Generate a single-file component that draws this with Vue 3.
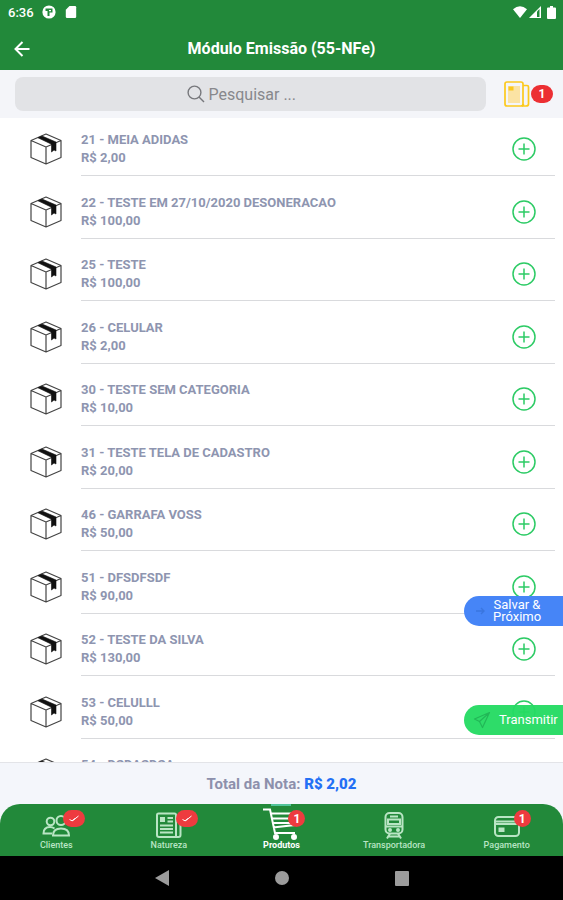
<template>
    <div class="screen">
        <div class="statusBar">
            <span class="clock">6:36</span>
            <svg class="sysIcon" viewBox="0 0 14 14" width="14" height="14">
                <circle cx="7" cy="7" r="6.6" fill="#fff" />
                <path d="M3.500 3.500h7v4H7.500v3.500H5.500V6H3.500z" fill="#22893a" />
                <path d="M7 5h2v1.200H7z" fill="#fff" />
            </svg>
            <svg class="sysIcon" viewBox="0 0 14 14" width="14" height="14">
                <path d="M5.5 1h5.5q1.2 0 1.2 1.2v9.6q0 1.2-1.2 1.2H3q-1.2 0-1.2-1.2V4.7z" fill="#fff" />
            </svg>
            <div class="sysRight">
                <svg viewBox="0 0 14 12" width="14" height="12">
                    <path d="M7 12L0 3.2Q7-2.8 14 3.2z" fill="#fff" />
                </svg>
                <svg viewBox="0 0 12 12" width="12" height="12">
                    <path d="M0 12L12 0v12z" fill="#fff" />
                    <path d="M8 5.500l2.500-2.500v8H8z" fill="#22893a" />
                </svg>
                <svg class="battery" viewBox="0 0 9 13" width="9" height="13">
                    <path d="M3 0h3v1.5h2q1 0 1 1V12q0 1-1 1H1q-1 0-1-1V2.500q0-1 1-1h2z" fill="#fff" />
                </svg>
            </div>
        </div>
        <header class="header">
            <button class="back" type="button" aria-label="Voltar">
                <svg viewBox="0 0 16 16" width="16" height="16" fill="none" stroke="#fff" stroke-width="2">
                    <path d="M15.500 8H1.500M8.500 1L1.500 8l7 7" />
                </svg>
            </button>
            <h1>Módulo Emissão (55-NFe)</h1>
        </header>
        <div class="toolbar">
            <label class="search">
                <svg viewBox="0 0 18 18" width="18" height="18" fill="none" stroke="#77787c" stroke-width="1.4">
                    <circle cx="7.500" cy="7.500" r="6.400" />
                    <path d="M12 12l5 5" />
                </svg>
                <input v-model="term" type="text" placeholder="Pesquisar ..." aria-label="Pesquisar">
            </label>
            <button class="cart" type="button" aria-label="Itens da nota">
                <svg viewBox="0 0 26 26" width="26" height="26" fill="none" stroke="#fcc91d" stroke-width="1.700">
                    <path d="M4 5h12v17H4z" fill="#fbe3a4" stroke="none" />
                    <rect x="1" y="1" width="18" height="24" rx="2" />
                    <path d="M19 4.500h4q1.500 0 1.500 1.500v17q0 2-2.500 2h-4q1.500-.5 1.500-2" />
                    <rect x="4.500" y="5.500" width="5" height="4" fill="#fcc91d" stroke="none" />
                </svg>
                <span class="badge">1</span>
            </button>
        </div>
        <main class="content">
            <ul class="list">
                <li v-for="item in filtered" :key="item.code" class="item">
                    <svg class="box" viewBox="0 0 32 32" width="32" height="32" fill="none" stroke="#444" stroke-width="1.200" stroke-linejoin="round">
                        <path d="M16 1L31 7.500v17L16 31 1 24.500v-17zM1 7.500L16 14l15-6.500M16 14v17" />
                        <path d="M8 4.800L12 3 26 9v9l-2-1-2.500 2v-7.800z" fill="#111" stroke="#111" stroke-width=".6" />
                    </svg>
                    <div class="info">
                        <div class="text">
                            <h2>{{item.code}} - {{item.name}}</h2>
                            <p>R$ {{item.price}}</p>
                        </div>
                        <button class="add" type="button" aria-label="Adicionar">
                            <svg viewBox="0 0 24 24" width="24" height="24" fill="none" stroke="#2dcb65" stroke-width="1.500">
                                <circle cx="12" cy="12" r="11" />
                                <path d="M12 6.500v11M6.500 12h11" />
                            </svg>
                        </button>
                    </div>
                </li>
            </ul>
            <div class="actions">
                <button class="action save" type="button">
                    <svg viewBox="0 0 18 18" width="18" height="18" fill="none" stroke="#3a76df" stroke-width="1.400">
                        <path d="M3 9h8M8 6l3 3-3 3" />
                    </svg>
                    <span>Salvar &amp; Próximo</span>
                </button>
                <button class="action send" type="button">
                    <svg viewBox="0 0 18 18" width="18" height="18" fill="none" stroke="#22b757" stroke-width="1.200" stroke-linejoin="round">
                        <path d="M16.500 1.500L1.500 8l5 2.500L9.500 16.500zM16.500 1.500L6.500 10.500" />
                    </svg>
                    <span>Transmitir</span>
                </button>
            </div>
        </main>
        <div class="total">Total da Nota:&nbsp;<strong>R$ 2,02</strong></div>
        <div class="tabsWrap">
            <nav class="tabs">
                <button v-for="tab in tabs" :key="tab.id" class="tab" :class="{ active : tab.id === current }" type="button" @click="current = tab.id">
                    <span class="tabIcon">
                        <svg v-if="tab.id === 'clientes'" viewBox="0 0 28 28" width="28" height="28">
                            <circle cx="8.500" cy="9.500" r="3.800" />
                            <circle cx="19" cy="8.500" r="4.500" />
                            <path d="M11 23.500q0-7 8-7t8 7zM10 21.500H1.500q0-6.500 6.500-6.500 2.500 0 4.500 1.500" />
                        </svg>
                        <svg v-else-if="tab.id === 'natureza'" viewBox="0 0 28 28" width="28" height="28">
                            <path d="M21 25H4q-2 0-2-2V3q0-1.500 1.500-1.500h16Q21 1.500 21 3zM21 6h3.500q1 0 1 1v16q0 2-2 2H21" />
                            <path d="M12.500 6H18M12.500 9.500H18M5 13.500h13M5 17h13M5 20.500h13" />
                            <path d="M6 6h3v3H6z" fill="currentColor" />
                        </svg>
                        <svg v-else-if="tab.id === 'produtos'" viewBox="0 0 36 32" width="36" height="32">
                            <path d="M0 1.500h7l5 23.500h20M8 5.500h26l-2.500 11.500-21.500 2.500" />
                            <path d="M9 10.500h24M10 15h22" />
                            <circle cx="13" cy="29" r="2" fill="currentColor" />
                            <circle cx="31" cy="29" r="2" fill="currentColor" />
                        </svg>
                        <svg v-else-if="tab.id === 'transportadora'" viewBox="0 0 28 28" width="28" height="28">
                            <rect x="5.500" y="1" width="17" height="20.500" rx="4" />
                            <path d="M10 4.500h8M8 7.500h12v4.500H8zM6 14.500h16M10 21.500l-3 5M18 21.500l3 5M8.500 24.500h11" />
                            <circle cx="10" cy="18" r="1" />
                            <circle cx="18" cy="18" r="1" />
                        </svg>
                        <svg v-else viewBox="0 0 28 28" width="28" height="28">
                            <rect x="2" y="5" width="24" height="19" rx="3.500" />
                            <path d="M2 9.500h24M2 12h24" />
                            <path d="M6.500 16.500h4v2.500H6.500z" fill="currentColor" />
                        </svg>
                        <span v-if="tab.badge" class="tabBadge" :class="{ round : !tab.done }">
                            <svg v-if="tab.done" viewBox="0 0 12 10" width="12" height="10">
                                <path d="M1.500 5.500L4 6.800 7 4.500M4.500 6.800L10.500 2" />
                            </svg>
                            <template v-else>{{tab.badge}}</template>
                        </span>
                    </span>
                    <span class="tabLabel">{{tab.label}}</span>
                </button>
            </nav>
        </div>
        <div class="androidNav">
            <button type="button" aria-label="Voltar"><svg viewBox="0 0 16 16" width="16" height="16"><path d="M15 0v16L1 8z" /></svg></button>
            <button type="button" aria-label="Início"><svg viewBox="0 0 16 16" width="16" height="16"><circle cx="8" cy="8" r="7" /></svg></button>
            <button type="button" aria-label="Recentes"><svg viewBox="0 0 16 16" width="16" height="16"><rect x="1" y="1" width="14" height="15" rx="1" /></svg></button>
        </div>
    </div>
</template>
<script setup>
    import { ref,computed } from 'vue'
    const term = ref("");
    const current = ref("produtos");
    const items = [
        { code : 21, name : "MEIA ADIDAS", price : "2,00" },
        { code : 22, name : "TESTE EM 27/10/2020 DESONERACAO", price : "100,00" },
        { code : 25, name : "TESTE", price : "100,00" },
        { code : 26, name : "CELULAR", price : "2,00" },
        { code : 30, name : "TESTE SEM CATEGORIA", price : "10,00" },
        { code : 31, name : "TESTE TELA DE CADASTRO", price : "20,00" },
        { code : 46, name : "GARRAFA VOSS", price : "50,00" },
        { code : 51, name : "DFSDFSDF", price : "90,00" },
        { code : 52, name : "TESTE DA SILVA", price : "130,00" },
        { code : 53, name : "CELULLL", price : "50,00" },
        { code : 54, name : "DSDASDSA", price : "10,00" }
    ];
    const tabs = [
        { id : "clientes", label : "Clientes", badge : 1, done : true },
        { id : "natureza", label : "Natureza", badge : 1, done : true },
        { id : "produtos", label : "Produtos", badge : 1, done : false },
        { id : "transportadora", label : "Transportadora", badge : 0, done : false },
        { id : "pagamento", label : "Pagamento", badge : 1, done : false }
    ];
    const filtered = computed(()=>{
        return items.filter((item)=>`${item.code} - ${item.name}`.includes(term.value.toUpperCase()));
    })
</script>
<style>
    body{
        margin:0;
        background:#fff;
    }
</style>
<style scoped>
    .screen{
        display:flex;
        flex-direction:column;
        height:100vh;
        overflow:hidden;
        font-family:Roboto, "Noto Sans", sans-serif;
        background:#fff;
    }
    button{
        padding:0;
        border:0;
        background:none;
        font-family:inherit;
        color:inherit;
        cursor:pointer;
    }
    svg{
        display:block;
        flex:none;
    }
    .statusBar{
        display:flex;
        align-items:center;
        flex:none;
        gap:8px;
        height:24px;
        padding:0 7px 0 8px;
        background:#22893a;
    }
    .clock{
        font-size:13px;
        font-weight:500;
        color:#fff;
    }
    .sysRight{
        display:flex;
        align-items:center;
        gap:2px;
        margin-left:auto;
    }
    .battery{
        margin-left:4px;
    }
    .header{
        display:grid;
        grid-template-columns:16px 1fr 16px;
        align-items:center;
        flex:none;
        height:42px;
        padding:4px 14px 0;
        background:#22893a;
    }
    .header h1{
        margin:0;
        font-size:16px;
        font-weight:700;
        line-height:20px;
        text-align:center;
        color:#fff;
    }
    .toolbar{
        display:flex;
        align-items:center;
        flex:none;
        gap:18px;
        height:48px;
        padding:0 10px 0 15px;
        background:#f4f5f9;
    }
    .search{
        display:flex;
        align-items:center;
        justify-content:center;
        flex:1;
        gap:4px;
        height:34px;
        border-radius:8px;
        background:#e2e3e6;
    }
    .search input{
        width:106px;
        padding:0;
        border:0;
        outline:0;
        background:none;
        font-family:inherit;
        font-size:16px;
        color:#55565a;
    }
    .search input::placeholder{
        color:#87888c;
        opacity:1;
    }
    .cart{
        display:flex;
        align-items:center;
        gap:1px;
    }
    .badge{
        width:22px;
        border-radius:9px;
        background:#ec2f33;
        font-size:12px;
        font-weight:700;
        line-height:18px;
        text-align:center;
        color:#fff;
    }
    .content{
        position:relative;
        flex:1;
        min-height:0;
        overflow:hidden;
    }
    .list{
        height:100%;
        margin:0;
        padding:0;
        overflow:hidden;
        list-style:none;
    }
    .item{
        display:flex;
        align-items:flex-end;
        gap:19px;
        height:62px;
        padding:0 8px 0 30px;
    }
    .item:nth-child(even){
        height:63px;
    }
    .item:first-child{
        height:58px;
    }
    .box{
        margin-bottom:11px;
    }
    .info{
        display:flex;
        align-items:center;
        justify-content:space-between;
        flex:1;
        height:52px;
        padding-right:19px;
        border-bottom:1px solid #d9dadd;
    }
    .text h2,
    .text p{
        margin:0;
        font-size:13px;
        font-weight:700;
        line-height:18px;
        color:#8e95b0;
    }
    .actions{
        position:absolute;
        right:0;
        bottom:27px;
        display:flex;
        flex-direction:column;
        gap:79px;
    }
    .action{
        display:flex;
        align-items:center;
        width:99px;
        height:30px;
        padding-left:9px;
        border-radius:15px 0 0 15px;
        font-size:13px;
        line-height:12px;
        color:#fff;
    }
    .save{
        gap:2px;
        background:#4685f7;
    }
    .save span{
        width:48px;
    }
    .send{
        gap:8px;
        background:rgba(37, 219, 99, .96);
    }
    .total{
        display:flex;
        align-items:center;
        justify-content:center;
        flex:none;
        height:41px;
        border-top:1px solid #e3e4e8;
        background:#f4f6fb;
        font-size:15px;
        font-weight:700;
        color:#8d90ac;
    }
    .total strong{
        color:#2470f5;
    }
    .tabsWrap{
        flex:none;
        background:#f4f6fb;
    }
    .tabs{
        display:grid;
        grid-template-columns:repeat(5, 1fr);
        height:52px;
        border-radius:20px 20px 0 0;
        background:#22893a;
    }
    .tab{
        display:flex;
        flex-direction:column;
        align-items:center;
        justify-content:flex-end;
        padding-bottom:6px;
        color:#b9e5c4;
    }
    .tab.active{
        color:#fff;
        background:linear-gradient(#52c49a, #52c49a) top center / 20px 2px no-repeat;
    }
    .tabIcon{
        position:relative;
        display:flex;
        justify-content:center;
        width:28px;
    }
    .tabIcon > svg{
        fill:none;
        stroke:currentColor;
        stroke-width:2;
    }
    .tabBadge{
        position:absolute;
        bottom:13px;
        left:21px;
        display:flex;
        align-items:center;
        justify-content:center;
        width:22px;
        height:17px;
        border-radius:9px;
        background:#ee3b3f;
        font-size:12px;
        font-weight:700;
        color:#fff;
    }
    .tabBadge svg{
        fill:none;
        stroke:#fff;
        stroke-width:1;
    }
    .tabBadge.round{
        width:17px;
    }
    .tabLabel{
        font-size:9px;
        font-weight:500;
        line-height:10px;
    }
    .tab.active .tabLabel{
        font-weight:700;
    }
    .androidNav{
        display:flex;
        align-items:center;
        justify-content:center;
        flex:none;
        gap:104px;
        height:44px;
        background:#000;
    }
    .androidNav svg{
        fill:#9c9c9c;
    }
</style>
